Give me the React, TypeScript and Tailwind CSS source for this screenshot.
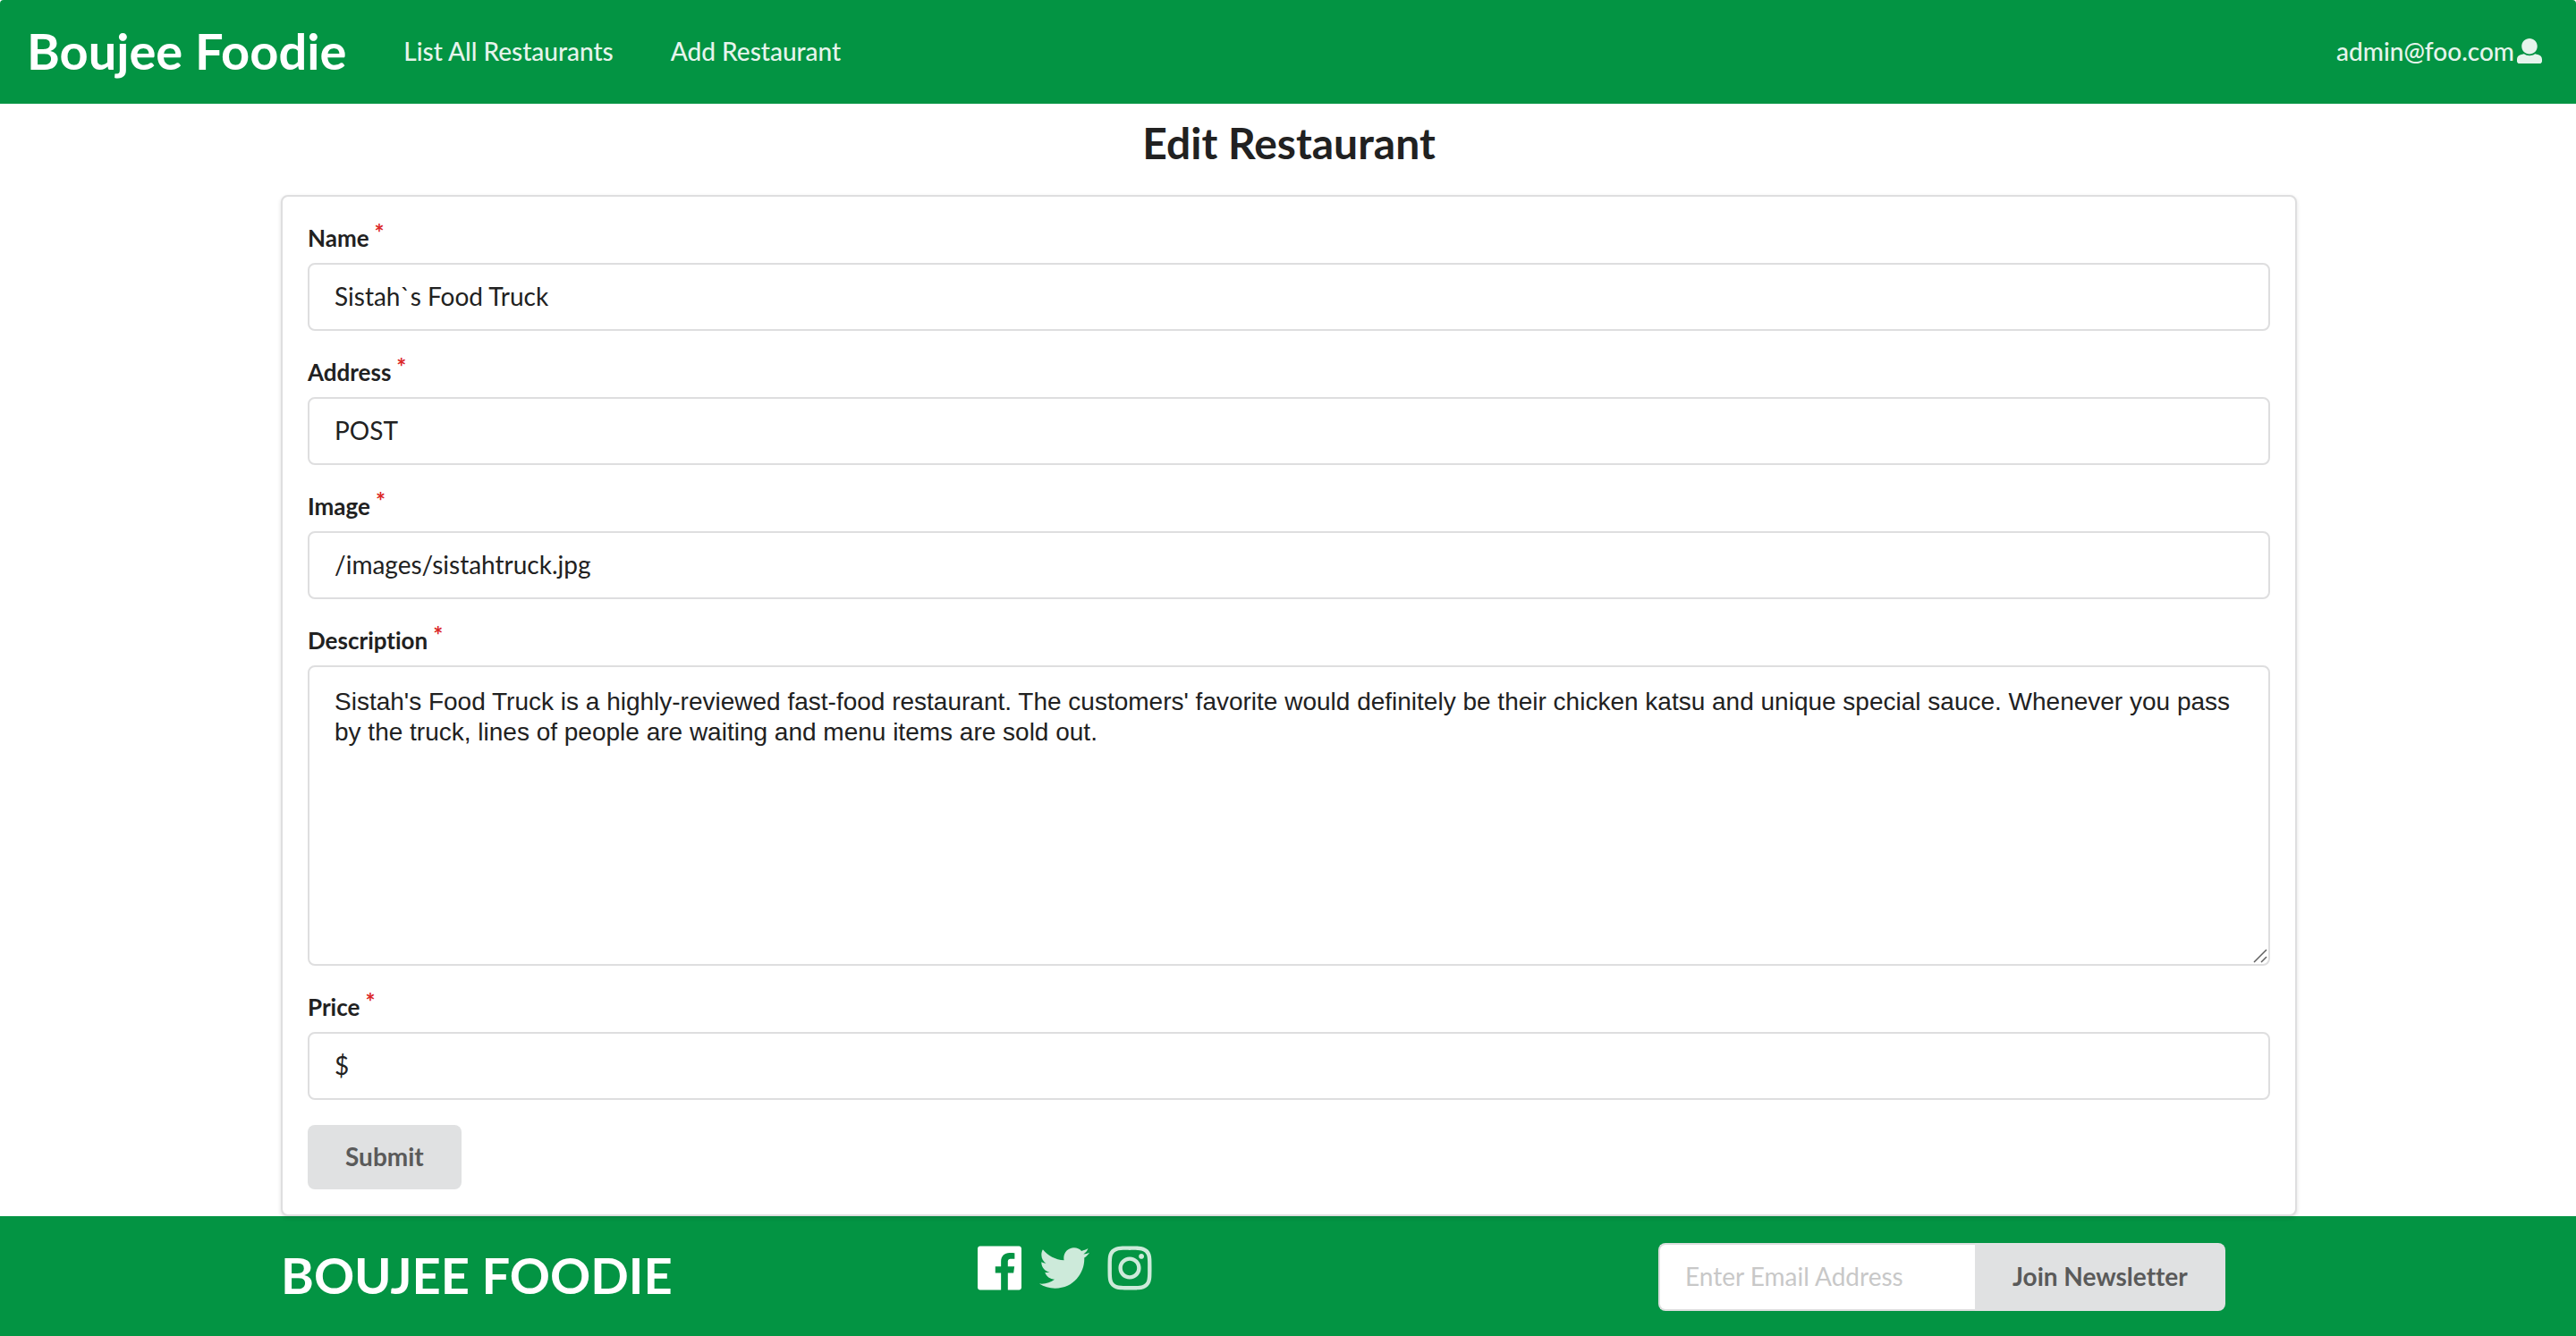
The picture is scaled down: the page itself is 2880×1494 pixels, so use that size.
import React from "react";
import { FaInstagram, FaTwitter } from "react-icons/fa";

function UserIcon() {
  return (
    <svg viewBox="0 0 512 512" className="size-7 fill-current" aria-hidden="true">
      <path d="M256 0c88.366 0 160 71.634 160 160s-71.634 160-160 160S96 248.366 96 160 167.634 0 256 0zm183.283 333.821l-71.313-17.828c-74.923 53.89-165.738 41.864-223.94 0l-71.313 17.828C29.981 344.505 0 382.903 0 426.955V464c0 26.51 21.49 48 48 48h416c26.51 0 48-21.49 48-48v-37.045c0-44.052-29.981-82.45-72.717-93.134z" />
    </svg>
  );
}

function FacebookIcon() {
  return (
    <svg viewBox="0 0 448 512" className="h-14 fill-current" aria-hidden="true">
      <path d="M448 56.7v398.5c0 13.7-11.1 24.7-24.7 24.7H309.1V306.5h58.2l8.7-67.6h-67v-43.2c0-19.6 5.4-32.9 33.5-32.9h35.8v-60.5c-6.2-.8-27.4-2.7-52.2-2.7-51.6 0-87 31.5-87 89.4v49.9h-58.4v67.6h58.4V480H24.7C11.1 480 0 468.9 0 455.3V56.7C0 43.1 11.1 32 24.7 32h398.5c13.7 0 24.8 11.1 24.8 24.7z" />
    </svg>
  );
}

function FieldLabel({ htmlFor, text }: { htmlFor: string; text: string }) {
  return (
    <label htmlFor={htmlFor} className="mb-2 flex h-[38px] items-start text-[26px] leading-9 font-bold">
      {text}
      <span className="ml-[6px] text-[26px] leading-6 text-[#db2828]">*</span>
    </label>
  );
}

function TextField({ id, label, value }: { id: string; label: string; value: string }) {
  return (
    <div className="mb-7">
      <FieldLabel htmlFor={id} text={label} />
      <input
        id={id}
        type="text"
        defaultValue={value}
        className="block h-[76px] w-full rounded-lg border-2 border-[#dededf] bg-white px-7 pb-[2px] text-[28px] outline-none"
      />
    </div>
  );
}

const description =
  "Sistah's Food Truck is a highly-reviewed fast-food restaurant. The customers' favorite would definitely be their chicken katsu and unique special sauce. Whenever you pass by the truck, lines of people are waiting and menu items are sold out.";

export default function App() {
  return (
    <div className="bg-white font-['Lato',sans-serif] text-[28px] leading-10 text-[#212121] [font-variant-ligatures:none]">
      <header className="flex h-[116px] items-center justify-between rounded-t bg-[#039443] px-[30px] pb-[2px] text-[#e6f4ec]">
        <nav className="flex items-center gap-16 font-medium">
          <a href="#home" className="text-[56px] leading-[72px] font-bold text-white">Boujee Foodie</a>
          <a href="#list">List All Restaurants</a>
          <a href="#add">Add Restaurant</a>
        </nav>
        <button type="button" className="mr-2 flex items-center gap-[3px] font-medium">
          admin@foo.com
          <UserIcon />
        </button>
      </header>

      <main className="mx-auto max-w-[2256px] pl-[2px]">
        <h2 className="pt-[14px] pb-7 text-center text-[48px] leading-[60px] font-bold">Edit Restaurant</h2>
        <form
          className="relative rounded-lg border-2 border-[#dededf] bg-white p-7 shadow-[0_2px_4px_rgba(34,36,38,0.15)]"
          onSubmit={(e: React.FormEvent) => e.preventDefault()}
        >
          <TextField id="name" label="Name" value="Sistah`s Food Truck" />
          <TextField id="address" label="Address" value="POST" />
          <TextField id="image" label="Image" value="/images/sistahtruck.jpg" />
          <div className="mb-7">
            <FieldLabel htmlFor="description" text="Description" />
            <div className="relative">
              <textarea
                id="description"
                defaultValue={description}
                className="block h-[336px] w-full resize-none rounded-lg border-2 border-[#dededf] bg-white px-7 py-[22px] font-['Liberation_Sans',sans-serif] text-[28px] leading-[34px] outline-none"
              />
              <svg viewBox="0 0 16 16" className="absolute right-[3px] bottom-[3px] size-4 stroke-[#606060]" strokeWidth="1.5" aria-hidden="true">
                <path d="M1 15L15 1M9 15l6-6" />
              </svg>
            </div>
          </div>
          <TextField id="price" label="Price" value="$" />
          <button type="submit" className="block h-[72px] rounded-lg bg-[#e0e1e2] px-[42px] pb-[2px] font-bold text-[#5a5a5a]">
            Submit
          </button>
        </form>
      </main>

      <footer className="bg-[#039443] pt-[30px] pb-7">
        <div className="mx-auto grid max-w-[2256px] grid-cols-3 gap-14 pl-[2px]">
          <h1 className="text-[56px] leading-[72px] font-bold text-white">BOUJEE FOODIE</h1>
          <div className="flex items-start gap-[7px] text-[56px]">
            <a href="#facebook" aria-label="Facebook" className="flex w-[66px] justify-center text-white"><FacebookIcon /></a>
            <a href="#twitter" aria-label="Twitter" className="flex w-[66px] justify-center text-[#cdeada]"><FaTwitter /></a>
            <a href="#instagram" aria-label="Instagram" className="flex w-[66px] justify-center text-[#cdeada]"><FaInstagram /></a>
          </div>
          <form className="flex" onSubmit={(e: React.FormEvent) => e.preventDefault()}>
            <input
              type="email"
              aria-label="Email address"
              placeholder="Enter Email Address"
              className="h-[76px] w-[354px] rounded-l-lg border-2 border-r-0 border-[#dededf] bg-white px-7 pb-[2px] text-[28px] outline-none placeholder:text-[#c8c8c8]"
            />
            <button type="submit" className="h-[76px] rounded-r-lg bg-[#e0e1e2] px-[42px] pb-[2px] font-bold whitespace-nowrap text-[#5a5a5a]">
              Join Newsletter
            </button>
          </form>
        </div>
      </footer>
    </div>
  );
}
